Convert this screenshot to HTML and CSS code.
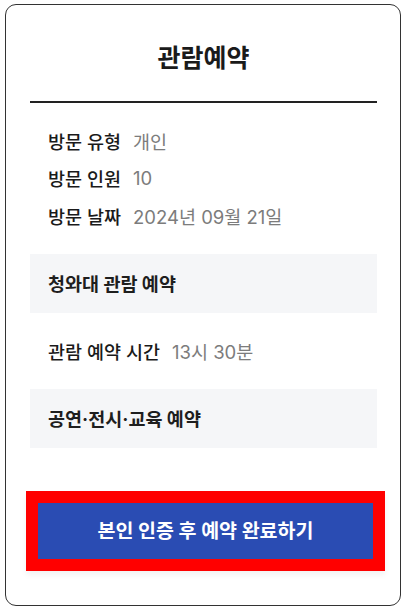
FILE: index.html
```html
<!DOCTYPE html>
<html lang="ko">
<head>
<meta charset="utf-8">
<title>관람예약</title>
<link rel="stylesheet" href="styles.css">
</head>
<body>
<div class="card">
  <h1 class="title">관람예약</h1>
  <div class="divider"></div>
  <ul class="info">
    <li class="row"><span class="label">방문 유형</span><span class="value">개인</span></li>
    <li class="row"><span class="label">방문 인원</span><span class="value">10</span></li>
    <li class="row"><span class="label">방문 날짜</span><span class="value">2024년 09월 21일</span></li>
  </ul>
  <div class="section">청와대 관람 예약</div>
  <div class="row single"><span class="label">관람 예약 시간</span><span class="value">13시 30분</span></div>
  <div class="section">공연·전시·교육 예약</div>
  <button class="submit" type="button"><span class="submit-inner">본인 인증 후 예약 완료하기</span></button>
</div>
</body>
</html>
```
FILE: styles.css
```css
html, body {
  margin: 0;
  padding: 0;
  background: #ffffff;
}
body {
  font-family: "Inter", "Noto Sans CJK KR", "Noto Sans", sans-serif;
  color: #222222;
}
.card {
  box-sizing: border-box;
  width: 396px;
  height: 602px;
  margin: 4px 0 0 5px;
  border: 1px solid #333333;
  border-radius: 11px;
  padding: 0 23px 0 24px;
}
.title {
  margin: 37px 0 0;
  height: 32px;
  line-height: 32px;
  font-size: 25px;
  font-weight: 700;
  text-align: center;
  color: #1a1a1a;
}
.divider {
  margin-top: 27px;
  height: 2px;
  background: #222222;
}
.info {
  list-style: none;
  margin: 0;
  padding: 19px 0 19px 18px;
}
.row {
  display: flex;
  align-items: center;
  height: 37.5px;
  font-size: 18.5px;
}
.row.single {
  height: 76px;
  padding-left: 18px;
}
.label {
  font-weight: 500;
  color: #1a1a1a;
  margin-right: 12px;
}
.value {
  color: #7c7c7c;
  font-weight: 400;
}
.section {
  display: flex;
  align-items: center;
  height: 59px;
  padding-left: 18px;
  background: #f5f6f8;
  font-size: 18.5px;
  font-weight: 700;
  color: #1e1e1e;
}
.submit {
  display: block;
  box-sizing: border-box;
  width: 359px;
  height: 80px;
  margin: 43px 0 0 -4px;
  padding: 0;
  border: 12px solid #ff0000;
  background: #2a4cb3;
  box-shadow: 0 4px 6px rgba(0, 0, 0, 0.05);
  font-family: inherit;
  cursor: pointer;
}
.submit-inner {
  display: block;
  font-size: 19.5px;
  font-weight: 700;
  color: #ffffff;
  line-height: 56px;
  text-align: center;
}
```
